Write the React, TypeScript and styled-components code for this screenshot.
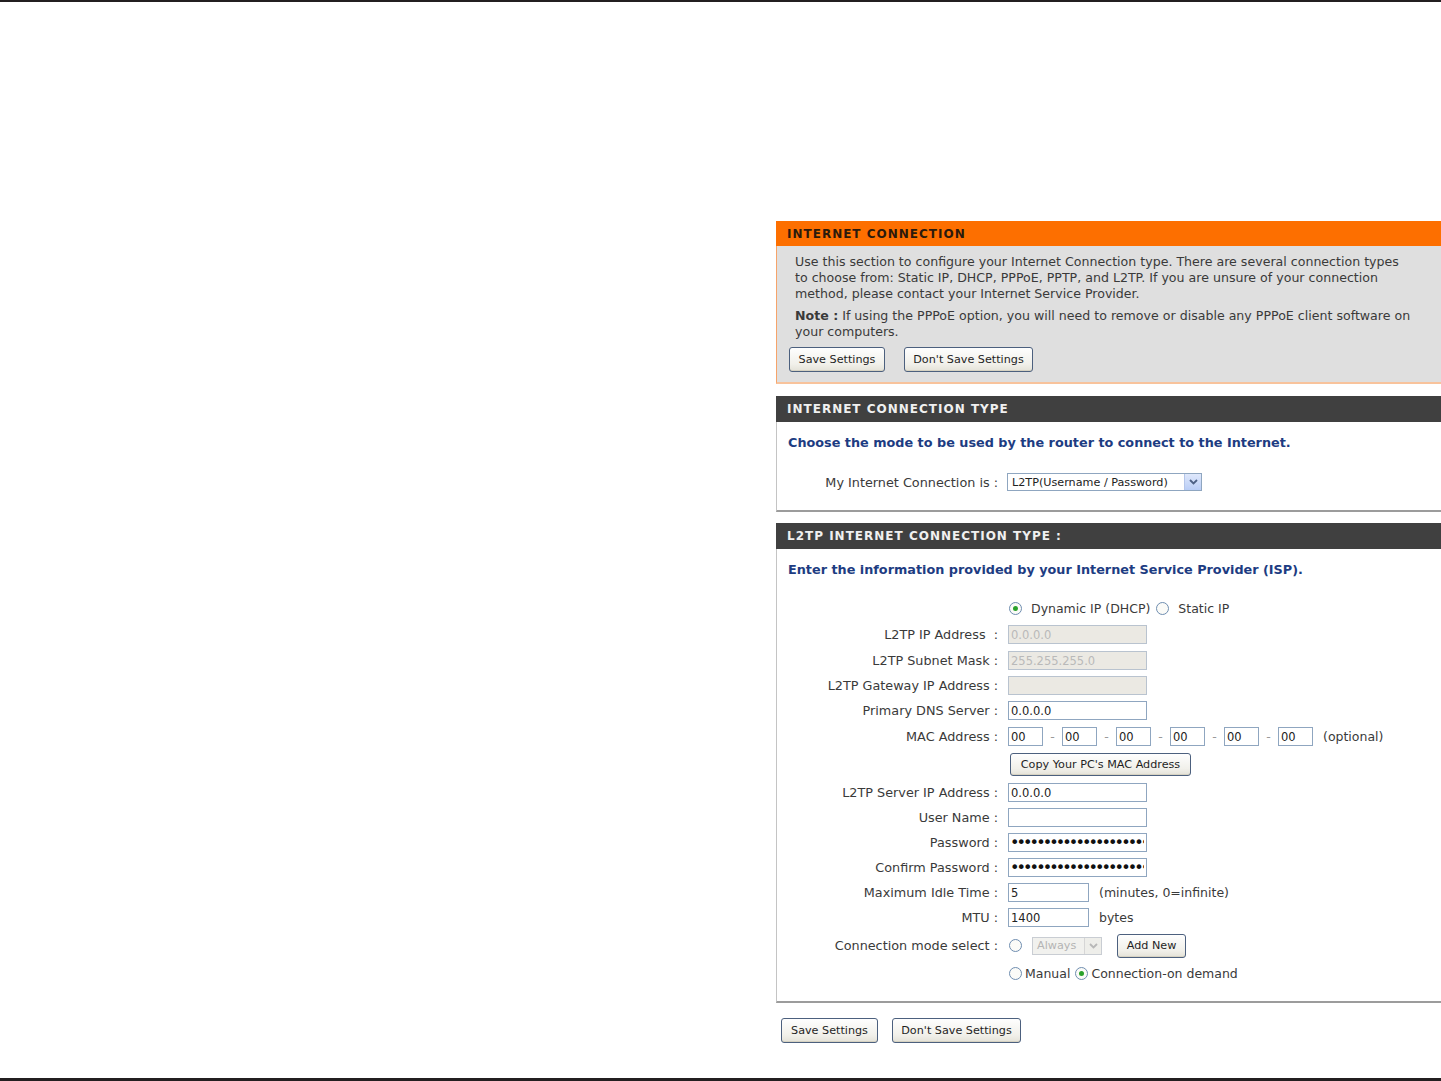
import React from "react";
import styled, { createGlobalStyle } from "styled-components";

const GlobalStyle = createGlobalStyle`
  html, body {
    margin: 0;
    padding: 0;
    background: #ffffff;
    overflow: hidden;
  }
  body {
    font-family: "DejaVu Sans", Verdana, sans-serif;
    font-size: 12.6px;
    color: #3a3a3a;
  }
`;

const Page = styled.div`
  height: 1081px;
  box-sizing: border-box;
  border-top: 2px solid #231f20;
  border-bottom: 3px solid #231f20;
  padding: 219px 0 0 776px;
  overflow: hidden;
`;

const Column = styled.div`
  width: 665px;
  display: flex;
  flex-direction: column;
`;

const Box = styled.section<{ $tone: "orange" | "dark" }>`
  display: flex;
  flex-direction: column;
  margin-bottom: ${(p) => (p.$tone === "orange" ? "12px" : "11px")};
`;

const Header = styled.div<{ $tone: "orange" | "dark" }>`
  height: ${(p) => (p.$tone === "orange" ? "25px" : "26px")};
  display: flex;
  align-items: center;
  padding-left: 11px;
  background: ${(p) => (p.$tone === "orange" ? "#fd6f00" : "#404040")};
  color: ${(p) => (p.$tone === "orange" ? "#2b1a0c" : "#f0f0f0")};
  font-weight: bold;
  font-size: 12px;
  letter-spacing: 1px;
`;

const Body = styled.div<{ $tone: "orange" | "dark"; $pad?: string }>`
  background: ${(p) => (p.$tone === "orange" ? "#dfdfdf" : "#ffffff")};
  border-left: 1px solid ${(p) => (p.$tone === "orange" ? "#f6a46a" : "#c4c4c4")};
  border-bottom: ${(p) => (p.$tone === "orange" ? "2px solid #f8c39c" : "2px solid #9c9c9c")};
  padding: ${(p) => p.$pad ?? "0"};
`;

const Para = styled.p<{ $mb?: number }>`
  margin: 0 0 ${(p) => p.$mb ?? 6}px 6px;
  line-height: 16px;
  white-space: nowrap;
  color: #3a3a3a;
`;

const ButtonBar = styled.div<{ $indent?: number; $gap?: number }>`
  display: flex;
  gap: ${(p) => p.$gap ?? 19}px;
  padding-left: ${(p) => p.$indent ?? 0}px;
`;

const Btn = styled.button<{ $w: number; $h?: number }>`
  width: ${(p) => p.$w}px;
  height: ${(p) => p.$h ?? 25}px;
  font-family: "DejaVu Sans", Verdana, sans-serif;
  font-size: 11.2px;
  color: #1f1f1f;
  background: linear-gradient(#fefefe, #f1f0ea 70%, #e4e2d8);
  border: 1px solid #4c607e;
  border-radius: 3px;
  box-shadow: inset 0 -1px 0 #d6d2c2;
  padding: 0;
  white-space: nowrap;
  cursor: pointer;
`;

const Lead = styled.div`
  font-weight: bold;
  font-size: 12.8px;
  color: #1d3c82;
  line-height: 16px;
  padding-left: 11px;
  white-space: nowrap;
`;

const Row = styled.div<{ $top?: number; $h?: number }>`
  display: grid;
  grid-template-columns: 221px 1fr;
  column-gap: 10px;
  align-items: center;
  height: ${(p) => p.$h ?? 25}px;
  margin-top: ${(p) => p.$top ?? 0}px;
`;

const Label = styled.label`
  text-align: right;
  white-space: nowrap;
  font-size: 12.8px;
  color: #3a3a3a;
`;

const Field = styled.div`
  display: flex;
  align-items: center;
  white-space: nowrap;
  font-size: 12.5px;
`;

const Input = styled.input<{ $w?: number }>`
  box-sizing: border-box;
  width: ${(p) => p.$w ?? 139}px;
  height: 19px;
  border: 1px solid #8fa6c0;
  padding: 0 2px;
  font-family: "DejaVu Sans", Verdana, sans-serif;
  font-size: 11.5px;
  color: #222;
  background: #fff;
  outline: none;

  &:disabled {
    background: #ebe9e3;
    color: #b9b9b9;
    border-color: #b9c3cf;
  }
`;

const Secret = styled(Input)`
  font-size: 16px;
  letter-spacing: -2.9px;
  padding-left: 1px;
  color: #111;
`;

const Sep = styled.span`
  width: 19px;
  text-align: center;
  color: #9a9a9a;
`;

const Note = styled.span<{ $ml?: number }>`
  margin-left: ${(p) => p.$ml ?? 10}px;
  color: #3a3a3a;
`;

const Radio = styled.span<{ $on?: boolean; $ml?: number; $mr?: number }>`
  box-sizing: border-box;
  width: 13px;
  height: 13px;
  border-radius: 50%;
  border: 1px solid #6f8db0;
  background: #fbfbf8;
  display: inline-flex;
  align-items: center;
  justify-content: center;
  margin-left: ${(p) => p.$ml ?? 0}px;
  margin-right: ${(p) => p.$mr ?? 5}px;
  flex-shrink: 0;

  &::after {
    content: "";
    width: 5px;
    height: 5px;
    border-radius: 50%;
    background: ${(p) => (p.$on ? "#2aa12a" : "transparent")};
  }
`;

const Select = styled.div<{ $w: number; $off?: boolean }>`
  box-sizing: border-box;
  width: ${(p) => p.$w}px;
  height: 18px;
  display: flex;
  align-items: center;
  justify-content: space-between;
  border: 1px solid ${(p) => (p.$off ? "#c9cdd3" : "#8fa6c0")};
  background: ${(p) => (p.$off ? "#f1f1ee" : "#ffffff")};
  color: ${(p) => (p.$off ? "#b4b4b4" : "#222")};
  font-size: 11.2px;
  padding-left: 4px;
`;

const Arrow = styled.span<{ $off?: boolean }>`
  width: 16px;
  height: 16px;
  display: flex;
  align-items: center;
  justify-content: center;
  background: ${(p) => (p.$off ? "#eeeeea" : "linear-gradient(#dfe8fb, #b9cdf6)")};
  border-left: 1px solid ${(p) => (p.$off ? "#d6d6d6" : "#b5c6ea")};
`;

const Chevron = ({ off }: { off?: boolean }) => (
  <svg width="9" height="6" viewBox="0 0 9 6">
    <path
      d="M1 1 L4.5 4.5 L8 1"
      fill="none"
      stroke={off ? "#b8b8b8" : "#4d6185"}
      strokeWidth="1.8"
    />
  </svg>
);

const Dots = "••••••••••••••••••••••";

export default function App() {
  return (
    <>
      <GlobalStyle />
      <Page>
        <Column>
          <Box $tone="orange">
            <Header $tone="orange">INTERNET CONNECTION</Header>
            <Body $tone="orange" $pad="8px 12px 10px 12px">
              <Para>
                Use this section to configure your Internet Connection type. There are several connection types
                <br />
                to choose from: Static IP, DHCP, PPPoE, PPTP, and L2TP. If you are unsure of your connection
                <br />
                method, please contact your Internet Service Provider.
              </Para>
              <Para $mb={7}>
                <b>Note :</b> If using the PPPoE option, you will need to remove or disable any PPPoE client software on
                <br />
                your computers.
              </Para>
              <ButtonBar>
                <Btn $w={96}>Save Settings</Btn>
                <Btn $w={129}>Don't Save Settings</Btn>
              </ButtonBar>
            </Body>
          </Box>

          <Box $tone="dark">
            <Header $tone="dark">INTERNET CONNECTION TYPE</Header>
            <Body $tone="dark" $pad="13px 0 19px 0">
              <Lead>Choose the mode to be used by the router to connect to the Internet.</Lead>
              <Row $top={22} $h={18}>
                <Label>My Internet Connection is :</Label>
                <Field style={{ marginLeft: -1 }}>
                  <Select $w={195}>
                    L2TP(Username / Password)
                    <Arrow>
                      <Chevron />
                    </Arrow>
                  </Select>
                </Field>
              </Row>
            </Body>
          </Box>

          <Box $tone="dark">
            <Header $tone="dark">L2TP INTERNET CONNECTION TYPE :</Header>
            <Body $tone="dark" $pad="13px 0 15px 0">
              <Lead>Enter the information provided by your Internet Service Provider (ISP).</Lead>
              <Row $top={18}>
                <span />
                <Field>
                  <Radio $on $ml={1} $mr={9} />
                  Dynamic IP (DHCP)
                  <Radio $ml={6} $mr={9} />
                  Static IP
                </Field>
              </Row>
              <Row $top={1}>
                <Label>L2TP IP Address&nbsp;&nbsp;:</Label>
                <Field>
                  <Input disabled defaultValue="0.0.0.0" />
                </Field>
              </Row>
              <Row $top={1}>
                <Label>L2TP Subnet Mask :</Label>
                <Field>
                  <Input disabled defaultValue="255.255.255.0" />
                </Field>
              </Row>
              <Row>
                <Label>L2TP Gateway IP Address :</Label>
                <Field>
                  <Input disabled defaultValue="" />
                </Field>
              </Row>
              <Row>
                <Label>Primary DNS Server :</Label>
                <Field>
                  <Input defaultValue="0.0.0.0" />
                </Field>
              </Row>
              <Row $top={1}>
                <Label>MAC Address :</Label>
                <Field>
                  <Input $w={35} defaultValue="00" />
                  <Sep>-</Sep>
                  <Input $w={35} defaultValue="00" />
                  <Sep>-</Sep>
                  <Input $w={35} defaultValue="00" />
                  <Sep>-</Sep>
                  <Input $w={35} defaultValue="00" />
                  <Sep>-</Sep>
                  <Input $w={35} defaultValue="00" />
                  <Sep>-</Sep>
                  <Input $w={35} defaultValue="00" />
                  <Note>(optional)</Note>
                </Field>
              </Row>
              <Row $top={3}>
                <span />
                <Field style={{ paddingLeft: 2 }}>
                  <Btn $w={181} $h={23}>Copy Your PC's MAC Address</Btn>
                </Field>
              </Row>
              <Row $top={3}>
                <Label>L2TP Server IP Address :</Label>
                <Field>
                  <Input defaultValue="0.0.0.0" />
                </Field>
              </Row>
              <Row>
                <Label>User Name :</Label>
                <Field>
                  <Input defaultValue="" />
                </Field>
              </Row>
              <Row>
                <Label>Password :</Label>
                <Field>
                  <Secret readOnly defaultValue={Dots} />
                </Field>
              </Row>
              <Row>
                <Label>Confirm Password :</Label>
                <Field>
                  <Secret readOnly defaultValue={Dots} />
                </Field>
              </Row>
              <Row>
                <Label>Maximum Idle Time :</Label>
                <Field>
                  <Input $w={81} defaultValue="5" />
                  <Note>(minutes, 0=infinite)</Note>
                </Field>
              </Row>
              <Row>
                <Label>MTU :</Label>
                <Field>
                  <Input $w={81} defaultValue="1400" />
                  <Note>bytes</Note>
                </Field>
              </Row>
              <Row $top={3}>
                <Label>Connection mode select :</Label>
                <Field>
                  <Radio $ml={1} $mr={0} />
                  <Select $w={70} $off style={{ marginLeft: 10 }}>
                    Always
                    <Arrow $off>
                      <Chevron off />
                    </Arrow>
                  </Select>
                  <Btn $w={69} $h={24} style={{ marginLeft: 15 }}>
                    Add New
                  </Btn>
                </Field>
              </Row>
              <Row $top={3}>
                <span />
                <Field>
                  <Radio $ml={1} $mr={3} />
                  Manual
                  <Radio $on $ml={5} $mr={3} />
                  Connection-on demand
                </Field>
              </Row>
            </Body>
          </Box>

          <ButtonBar $indent={5} $gap={14} style={{ marginTop: 4 }}>
            <Btn $w={97}>Save Settings</Btn>
            <Btn $w={129}>Don't Save Settings</Btn>
          </ButtonBar>
        </Column>
      </Page>
    </>
  );
}
